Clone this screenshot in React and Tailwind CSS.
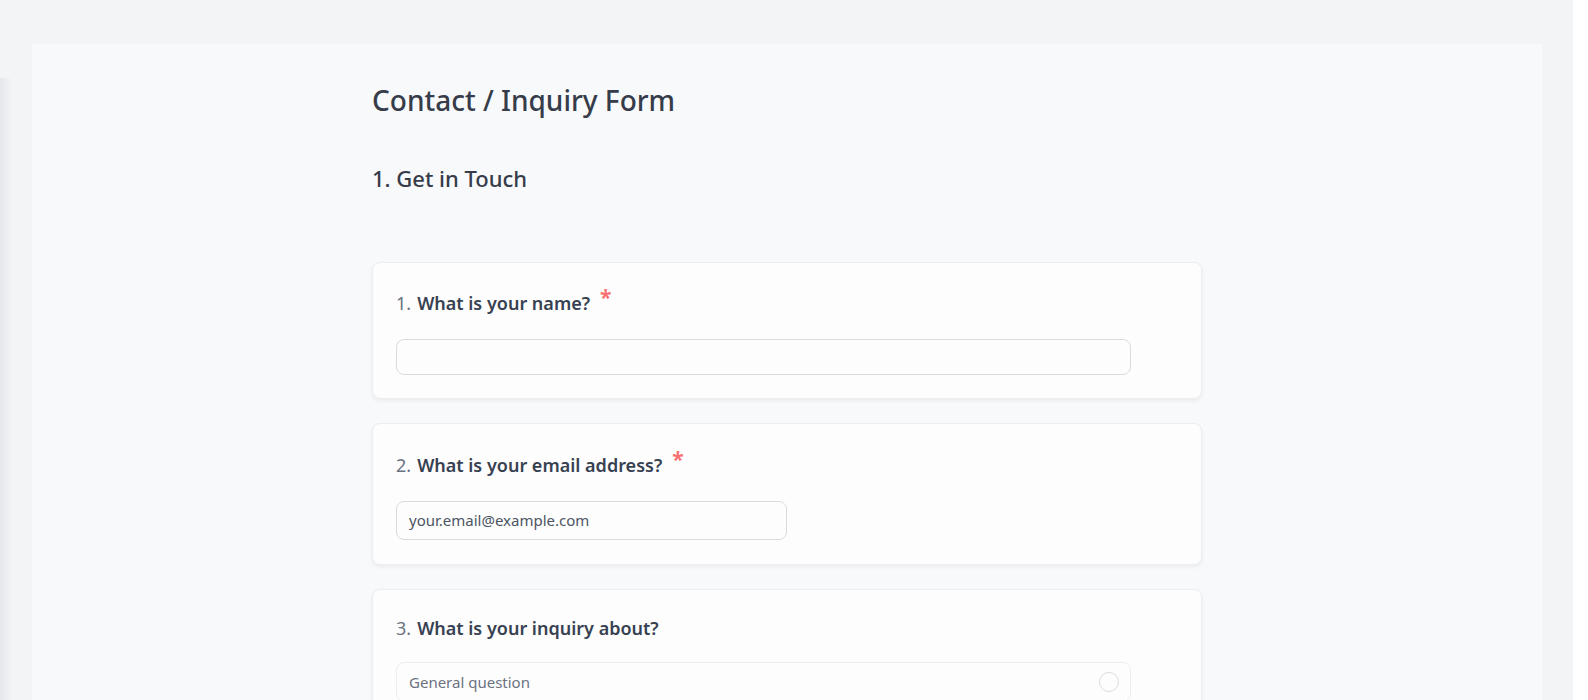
import React from "react";

const font = { fontFamily: '"Noto Sans", "Open Sans", sans-serif' };

function Label({ n, text, required }) {
  return (
    <div className="flex items-start text-[18px] leading-[28px] text-[#374151]">
      <span className="text-[#6b7280] font-normal mr-[6px]">{n}.</span>
      <span className="font-semibold">{text}</span>
      {required && (
        <span className="ml-[10px] text-[#f87171] text-[21px] leading-[20px] font-bold mt-[-2px]">*</span>
      )}
    </div>
  );
}

export default function App() {
  return (
    <div className="flex h-[700px] w-full overflow-hidden bg-white" style={font}>
      <div className="relative flex-1 bg-[#f3f4f6] pt-[44px] pl-[32px] pr-[31px]">
        <div className="absolute left-0 top-[78px] bottom-0 w-[12px] bg-gradient-to-r from-[#e5e7eb] to-transparent" />
        <div className="h-full bg-[#f8f9fb]">
          <div className="mx-auto w-[830px] pt-[36px]">
            <h1 className="text-[28px] leading-[40px] font-medium text-[#363c4a]">
              Contact / Inquiry Form
            </h1>
            <h2 className="mt-[42px] text-[22px] leading-[32px] font-medium text-[#363c4a]">
              1. Get in Touch
            </h2>
            <div className="mt-[68px] flex flex-col gap-[24px]">
              <div className="rounded-lg border border-[#eceef1] bg-[#fdfdfd] px-[23px] pt-[26px] pb-[23px] shadow-[0_2px_4px_rgba(0,0,0,0.06)]">
                <Label n="1" text="What is your name?" required />
                <div className="mt-[22px] h-[36px] w-[735px] rounded-lg border border-[#d8dbe0] bg-[#fdfdfd]" />
              </div>
              <div className="rounded-lg border border-[#eceef1] bg-[#fdfdfd] px-[23px] pt-[27px] pb-[24px] shadow-[0_2px_4px_rgba(0,0,0,0.06)]">
                <Label n="2" text="What is your email address?" required />
                <div className="mt-[22px] flex h-[39px] w-[391px] items-center rounded-lg border border-[#d8dbe0] bg-[#fdfdfd] px-[12px] text-[15px] text-[#4b5563]">
                  your.email@example.com
                </div>
              </div>
              <div className="rounded-lg border border-[#eceef1] bg-[#fdfdfd] px-[23px] pt-[24px] pb-[23px] shadow-[0_2px_4px_rgba(0,0,0,0.06)]">
                <Label n="3" text="What is your inquiry about?" />
                <div className="mt-[20px] flex h-[40px] w-[735px] items-center justify-between rounded-lg border border-[#eceef1] bg-[#fdfdfd] pl-[12px] pr-[11px] text-[15px] text-[#6b7280]">
                  <span>General question</span>
                  <span className="h-[20px] w-[20px] rounded-full border border-[#d8dbe0]" />
                </div>
              </div>
            </div>
          </div>
        </div>
      </div>
      <div className="w-[15px] bg-white" />
    </div>
  );
}
